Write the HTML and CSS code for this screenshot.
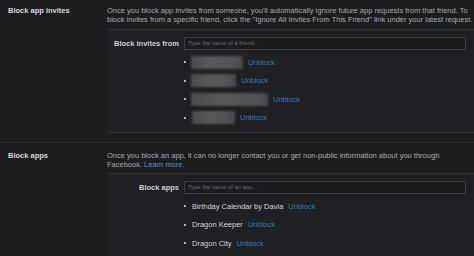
FILE: index.html
```html
<!DOCTYPE html>
<html>
<head>
<meta charset="utf-8">
<link rel="stylesheet" href="styles.css">
</head>
<body>
<div class="section first">
  <div class="section-label">Block app invites</div>
  <div class="section-body">
    <p class="desc">Once you block app invites from someone, you'll automatically ignore future app requests from that friend. To<br>block invites from a specific friend, click the "Ignore All Invites From This Friend" link under your latest request.</p>
    <div class="panel">
      <div class="field">
        <label class="field-label">Block invites from</label>
        <div class="input">Type the name of a friend...</div>
      </div>
      <ul class="list">
        <li class="item"><span class="blur w1"></span><a class="unblock">Unblock</a></li>
        <li class="item"><span class="blur w2"></span><a class="unblock">Unblock</a></li>
        <li class="item"><span class="blur w3"></span><a class="unblock">Unblock</a></li>
        <li class="item"><span class="blur w4"></span><a class="unblock">Unblock</a></li>
      </ul>
    </div>
  </div>
</div>
<div class="section second">
  <div class="section-label">Block apps</div>
  <div class="section-body">
    <p class="desc">Once you block an app, it can no longer contact you or get non-public information about you through<br>Facebook. <a class="learn">Learn more.</a></p>
    <div class="panel">
      <div class="field">
        <label class="field-label">Block apps</label>
        <div class="input">Type the name of an app...</div>
      </div>
      <ul class="list apps">
        <li class="item"><span class="name">Birthday Calendar by Davia</span><a class="unblock">Unblock</a></li>
        <li class="item"><span class="name">Dragon Keeper</span><a class="unblock">Unblock</a></li>
        <li class="item"><span class="name">Dragon City</span><a class="unblock">Unblock</a></li>
      </ul>
    </div>
  </div>
</div>
</body>
</html>
```
FILE: styles.css
```css
html, body {
  margin: 0;
  padding: 0;
  background: #1c1d1f;
  height: 100%;
  overflow: hidden;
}
body {
  font-family: "Liberation Sans", Arial, sans-serif;
  font-size: 7.5px;
  color: #a8a9ab;
}
.section {
  display: flex;
}
.section.first {
  padding: 7px 0 9px;
  border-bottom: 1px solid #2b2d30;
}
.section.second {
  padding-top: 9px;
}
.section-label {
  width: 99px;
  padding-left: 8px;
  font-weight: bold;
  color: #d9d9d9;
  line-height: 8.5px;
}
.section-body {
  flex: 1;
}
.desc {
  margin: 0 0 5px;
  line-height: 8.5px;
  white-space: nowrap;
}
.second .desc {
  margin-bottom: 4px;
}
.learn {
  color: #5d8fc7;
}
.panel {
  background: #1f2023;
  border-top: 1px solid #2d2f33;
  border-bottom: 1px solid #2d2f33;
  padding: 7px 0 5px;
}
.field {
  display: flex;
  align-items: center;
  gap: 5px;
}
.field-label {
  width: 72px;
  text-align: right;
  font-weight: bold;
  color: #cfd0d2;
}
.input {
  width: 277px;
  height: 11px;
  border: 1px solid #3b3e42;
  background: #1a1b1d;
  color: #6c6e72;
  font-size: 5.8px;
  line-height: 11px;
  padding-left: 3px;
  box-sizing: content-box;
}
.list {
  list-style: none;
  margin: 3px 0 0;
  padding: 0 0 0 77px;
}
.item {
  display: flex;
  align-items: center;
  height: 18.5px;
}
.item::before {
  content: "";
  width: 2px;
  height: 2px;
  background: #b8b9bb;
  margin-right: 5px;
  flex: none;
}
.apps .item::before {
  margin-right: 6px;
}
.blur {
  display: block;
  height: 13px;
  background: linear-gradient(90deg, #4a4b4d, #58595b 40%, #525355 80%, #48494b);
  filter: blur(0.8px);
}
.w1 { width: 52px; }
.w2 { width: 45px; }
.w3 { width: 77px; }
.w4 { width: 43px; margin-left: 1px; }
.name {
  color: #d4d5d7;
}
.unblock {
  color: #3f78b6;
  margin-left: 5px;
}
```
